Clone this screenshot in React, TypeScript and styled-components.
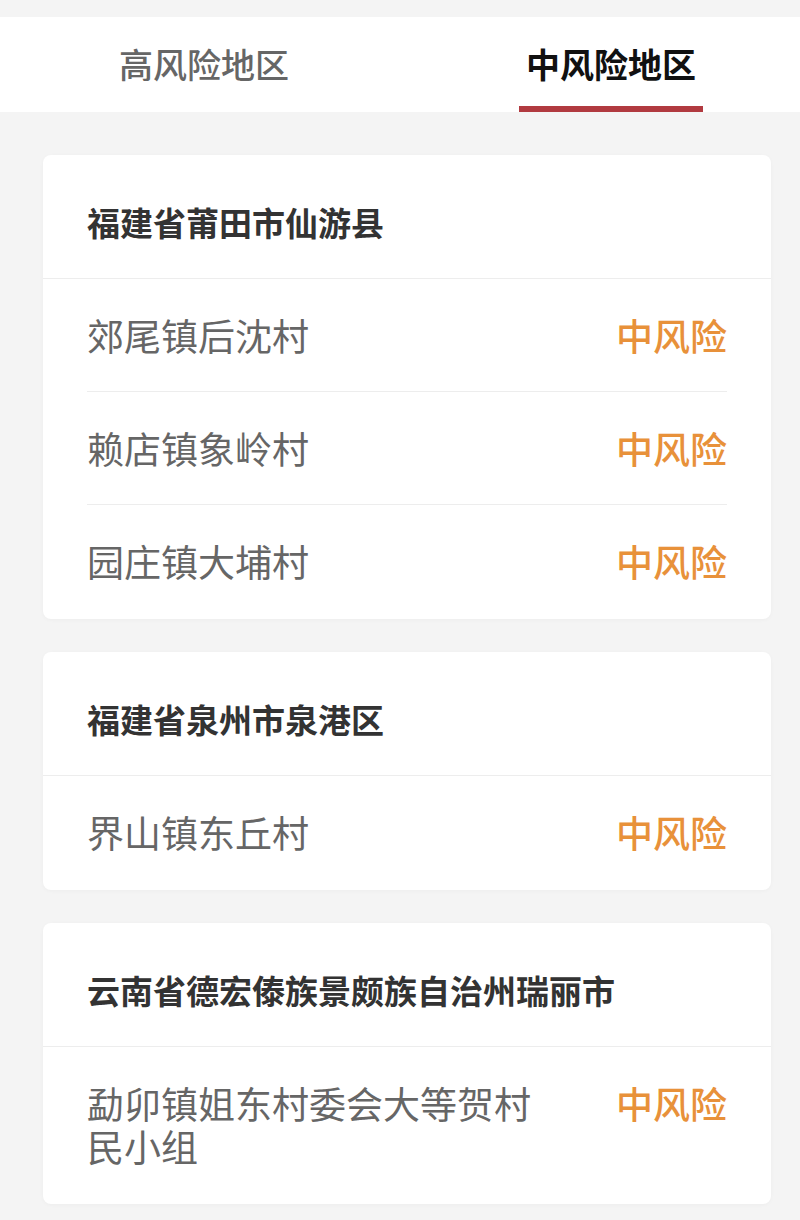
import React from 'react'
import styled, { createGlobalStyle } from 'styled-components'

type Area = { name: string; level: string }
type Region = { title: string; areas: Area[] }

const regions: Region[] = [
  {
    title: '福建省莆田市仙游县',
    areas: [
      { name: '郊尾镇后沈村', level: '中风险' },
      { name: '赖店镇象岭村', level: '中风险' },
      { name: '园庄镇大埔村', level: '中风险' },
    ],
  },
  {
    title: '福建省泉州市泉港区',
    areas: [{ name: '界山镇东丘村', level: '中风险' }],
  },
  {
    title: '云南省德宏傣族景颇族自治州瑞丽市',
    areas: [{ name: '勐卯镇姐东村委会大等贺村民小组', level: '中风险' }],
  },
]

const App = () => {
  return (
    <Page>
      <GlobalStyle />
      <TabBar>
        <Tab>高风险地区</Tab>
        <Tab active>中风险地区</Tab>
      </TabBar>
      <List>
        {regions.map((r) => (
          <Card key={r.title}>
            <CardTitle>{r.title}</CardTitle>
            {r.areas.map((a) => (
              <Row key={a.name}>
                <AreaName>{a.name}</AreaName>
                <Level>{a.level}</Level>
              </Row>
            ))}
          </Card>
        ))}
      </List>
    </Page>
  )
}

export default App

const GlobalStyle = createGlobalStyle`
  body{
    margin: 0;
    background-color: #f4f4f4;
    font-family: "Noto Sans CJK SC", "Noto Sans", sans-serif;
  }
`
const Page = styled.div`
  width: 800px;
  min-height: 1220px;
  padding-top: 17px;
  background-color: #f4f4f4;
`
const TabBar = styled.div`
  display: flex;
  gap: 223px;
  padding-left: 112px;
  height: 95px;
  background-color: #fff;
`
const Tab = styled.div<{ active?: boolean }>`
  width: 184px;
  display: flex;
  align-items: center;
  justify-content: center;
  box-sizing: border-box;
  padding-top: 4px;
  font-size: 34px;
  font-weight: ${(p) => (p.active ? 700 : 500)};
  color: ${(p) => (p.active ? '#111' : '#666')};
  border-bottom: 6px solid ${(p) => (p.active ? '#b13a40' : 'transparent')};
`
const List = styled.div`
  display: flex;
  flex-direction: column;
  gap: 33px;
  padding: 43px 29px 0 43px;
`
const Card = styled.div`
  background-color: #fff;
  border-radius: 8px;
  box-shadow: 0 1px 4px rgba(0, 0, 0, 0.03);
`
const CardTitle = styled.div`
  padding: 48px 44px 37px;
  line-height: 38px;
  font-size: 33px;
  font-weight: 700;
  color: #333;
  border-bottom: 1px solid #ededed;
`
const Row = styled.div`
  display: flex;
  justify-content: space-between;
  align-items: flex-start;
  margin: 0 44px;
  padding: 35px 0 34px;
  border-bottom: 1px solid #ededed;
  &:last-child{
    border-bottom: none;
    padding-bottom: 36px;
  }
`
const AreaName = styled.div`
  max-width: 470px;
  font-size: 37px;
  line-height: 43px;
  color: #666;
`
const Level = styled.div`
  flex-shrink: 0;
  font-size: 37px;
  line-height: 43px;
  font-weight: 500;
  color: #e8913a;
`
